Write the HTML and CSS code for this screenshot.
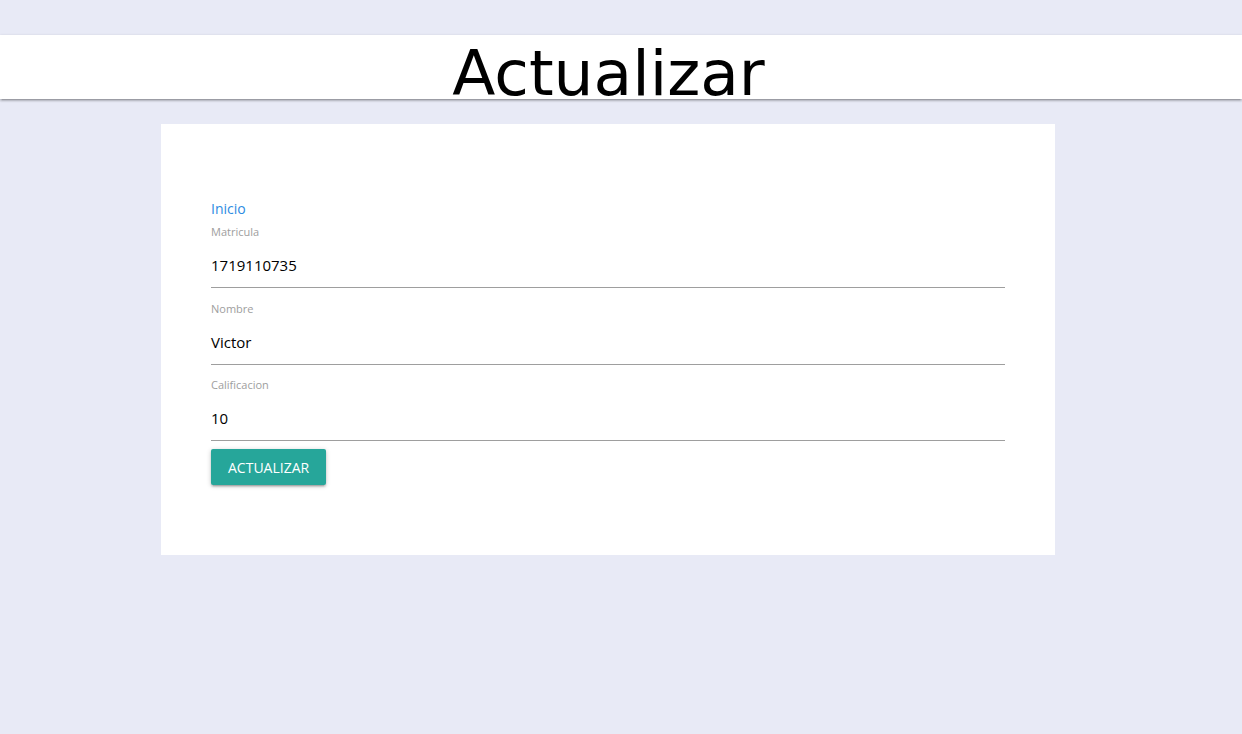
FILE: index.html
```html
<!DOCTYPE html>
<html lang="es">
<head>
<meta charset="utf-8">
<title>Actualizar</title>
<link rel="stylesheet" href="styles.css">
</head>
<body>
<div class="page">
  <header class="topbar">
    <h1 class="title">Actualizar</h1>
  </header>
  <main class="card">
    <a class="home-link" href="#">Inicio</a>
    <form class="form">
      <div class="field">
        <label class="field-label">Matricula</label>
        <div class="field-input">1719110735</div>
      </div>
      <div class="field">
        <label class="field-label">Nombre</label>
        <div class="field-input">Victor</div>
      </div>
      <div class="field">
        <label class="field-label">Calificacion</label>
        <div class="field-input">10</div>
      </div>
      <button class="btn" type="button">ACTUALIZAR</button>
    </form>
  </main>
</div>
</body>
</html>
```
FILE: styles.css
```css
html, body {
  margin: 0;
  padding: 0;
  background: #e8eaf6;
  font-family: "Open Sans", "Liberation Sans", sans-serif;
}

.page {
  padding-top: 35px;
  min-height: 699px;
}

.topbar {
  height: 64px;
  background: #fff;
  box-shadow: 0 2px 2px 0 rgba(0,0,0,0.14), 0 3px 1px -2px rgba(0,0,0,0.12), 0 1px 3px 0 rgba(0,0,0,0.2);
  padding-right: 25px;
  text-align: center;
  position: relative;
  z-index: 1;
}

.title {
  margin: 0;
  font-family: "DejaVu Sans", sans-serif;
  font-weight: normal;
  font-size: 63px;
  line-height: 78px;
  height: 64px;
  color: #000;
}

.card {
  display: block;
  margin: 25px 0 0 161px;
  width: 894px;
  box-sizing: border-box;
  background: #fff;
  padding: 75px 50px 70px 50px;
}

.home-link {
  display: block;
  font-size: 14px;
  line-height: 20px;
  color: #2e8be2;
  text-decoration: none;
  margin-bottom: 5px;
}

.form {
  display: flex;
  flex-direction: column;
  align-items: flex-start;
}

.field {
  align-self: stretch;
  margin-bottom: 12.5px;
}

.field:last-of-type {
  margin-bottom: 8px;
}

.field-label {
  display: block;
  font-size: 11px;
  line-height: 16px;
  color: #9e9e9e;
}

.field-input {
  height: 48px;
  box-sizing: border-box;
  padding-top: 14px;
  font-size: 15px;
  line-height: 22px;
  color: #000;
  border-bottom: 1px solid #9e9e9e;
}

.btn {
  height: 36px;
  padding: 0 17px;
  border: none;
  border-radius: 2px;
  background: #26a69a;
  color: #fff;
  font-family: "Open Sans", "Liberation Sans", sans-serif;
  font-size: 14px;
  box-shadow: 0 2px 2px 0 rgba(0,0,0,0.14), 0 3px 1px -2px rgba(0,0,0,0.12), 0 1px 5px 0 rgba(0,0,0,0.2);
  cursor: pointer;
}
```
